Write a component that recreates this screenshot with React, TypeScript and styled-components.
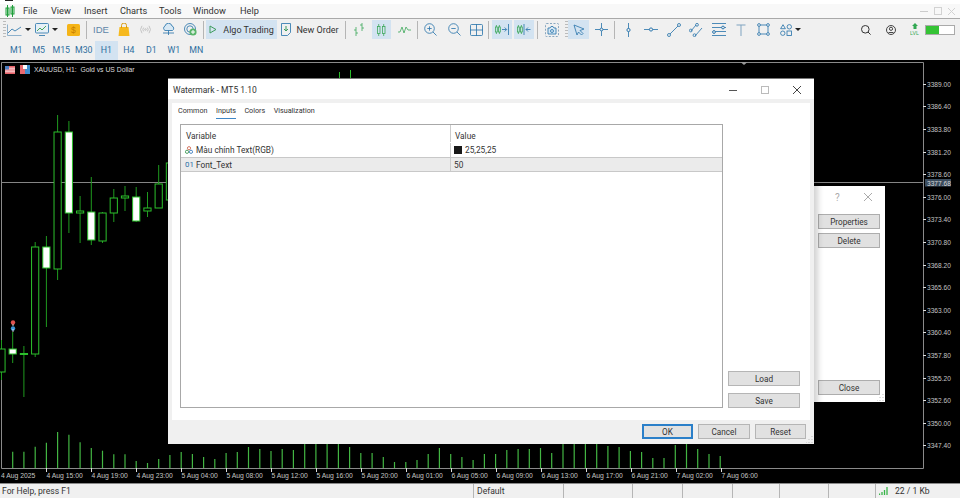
import React from "react";
import styled, { createGlobalStyle } from "styled-components";

const Global = createGlobalStyle`
  html, body { margin: 0; padding: 0; background: #f0f0f0; }
  body { width: 960px; height: 498px; overflow: hidden; font-family: Roboto, "Liberation Sans", sans-serif; font-size: 8.5px; color: #333; }
  * { box-sizing: border-box; }
`;

const Page = styled.div`width: 960px; height: 498px; display: flex; flex-direction: column;`;
const TopStrip = styled.div`height: 4px; background: #fff; flex: none; padding-left: 5px;`;
const TopMark = styled.div`width: 8px; height: 1px; background: #222;`;
const MenuBar = styled.div`height: 15px; flex: none; background: #f8f8f8; border-bottom: 1px solid #a9a9a9; display: flex; align-items: center; position: relative;`;
const MenuLogo = styled.div`width: 23px; padding-left: 5px; display: flex; align-items: center;`;
const MenuItem = styled.span<{ $w: number }>`width: ${p => p.$w}px; font-size: 9.2px; color: #333; line-height: 14px;`;
const WinControls = styled.div`margin-left: auto; padding-right: 5px; width: 40px; display: flex; justify-content: space-between; align-items: center;`;

const ToolRow = styled.div`height: 21px; flex: none; background: #f0f0f0; display: flex; align-items: center;`;
const PeriodRow = styled.div`height: 20px; flex: none; background: #f0f0f0; display: flex; align-items: center; padding-left: 5px;`;
const Gripper = styled.div<{ $m?: number }>`width: 3px; height: 18px; flex: none; margin-left: ${p => p.$m ?? 3}px; background: repeating-linear-gradient(to bottom, #bbb 0 1px, transparent 1px 3px);`;
const Sep = styled.div<{ $m?: number }>`width: 1px; height: 18px; background: #b5b5b5; flex: none; margin-left: ${p => p.$m ?? 0}px;`;
const Tool = styled.div<{ $w: number; $on?: boolean; $m?: number; $gap?: number }>`
  width: ${p => p.$w}px; height: 19px; flex: none; margin-left: ${p => p.$m ?? 0}px;
  display: flex; align-items: center; justify-content: center; gap: ${p => p.$gap ?? 3}px;
  font-size: 9px; color: #333;
  background: ${p => (p.$on ? "#d3e3f1" : "transparent")};
`;
const IdeLabel = styled.span`font-size: 9.5px; color: #5e86a8; font-family: "Liberation Sans", sans-serif;`;
const Caret = styled.span`width: 0; height: 0; border-left: 3px solid transparent; border-right: 3px solid transparent; border-top: 3px solid #222;`;
const RightTools = styled.div`margin-left: auto; padding-right: 5px; display: flex; align-items: center;`;
const Progress = styled.div`width: 30px; height: 10px; border: 1px solid #aaa; background: #fff; display: flex;`;
const ProgressFill = styled.div`background: #35c335; height: 100%;`;
const Period = styled.div<{ $on?: boolean }>`
  width: 22.5px; height: 19px; display: flex; align-items: center; justify-content: center;
  font-size: 8.8px; color: #2f6f9f; background: ${p => (p.$on ? "#d3e3f1" : "transparent")};
`;

const Chart = styled.div`flex: 1; position: relative; background: #000; min-height: 0;`;
const ChartSvg = styled.svg`display: block;`;
const ChartTitle = styled.div`position: absolute; left: 5px; top: 5px; display: flex; align-items: center; gap: 4.5px; color: #ddd; font-size: 6.8px; line-height: 9px; font-family: "Liberation Sans", sans-serif; white-space: pre;`;

const BackWindow = styled.div`
  position: absolute; left: 640px; top: 126px; width: 245px; height: 216px; background: #fff;
  padding: 0 5px 7px 0; display: flex; flex-direction: column; align-items: flex-end;
`;
const BackTitle = styled.div`height: 22px; width: 62px; display: flex; align-items: center; justify-content: space-between; padding: 0 8px 0 17px; margin-bottom: 6px; color: #aaa; font-size: 10px;`;
const BackButton = styled.div<{ $mt?: number }>`
  width: 62px; height: 15px; flex: none; margin-bottom: 4px; background: #e1e1e1; border: 1px solid #adadad;
  display: flex; align-items: center; justify-content: center; font-size: 8.2px; color: #333;
  ${p => (p.$mt ? `margin-top: auto; margin-bottom: 0;` : "")}
`;

const Dialog = styled.div`
  position: absolute; left: 168px; top: 18px; width: 646px; height: 366px; background: #f0f0f0;
  border-top: 1px solid #777; display: flex; flex-direction: column;
  box-shadow: 4px 0 6px rgba(0,0,0,.18);
`;
const DialogTitle = styled.div`height: 20px; flex: none; background: #fff; display: flex; align-items: center; justify-content: space-between; padding: 1px 13px 0 5px; font-size: 8.5px; color: #333;`;
const WinBtns = styled.div`display: flex; align-items: center; gap: 24px;`;
const PageArea = styled.div`flex: 1; min-height: 0; margin: 4px 4px 0 4px; background: #fff; display: flex; flex-direction: column; padding: 0 0 0 8px;`;
const Tabs = styled.div`height: 19px; flex: none; display: flex; gap: 7.5px; margin-left: -2px; align-items: flex-start; padding-top: 2px;`;
const Tab = styled.div<{ $on?: boolean }>`height: 14px; line-height: 12px; font-size: 7.2px; color: #333; margin-right: 1px; ${p => (p.$on ? "border-bottom: 1px solid #3d86c6;" : "")}`;
const Content = styled.div`flex: 1; min-height: 0; display: flex; padding-bottom: 12px; padding-top: 2px;`;
const Table = styled.div`width: 543px; border: 1px solid #a8a8a8; background: #fff; display: flex; flex-direction: column;`;
const TRow = styled.div<{ $sel?: boolean; $h: number; $pt?: number }>`
  height: ${p => p.$h}px; display: grid; grid-template-columns: 270px 1fr; align-items: center; flex: none;
  font-size: 8.3px; color: #333; padding-top: ${p => p.$pt ?? 0}px;
  ${p => (p.$sel ? "background: #ebebeb; border-top: 1px solid #c8c8c8; border-bottom: 1px solid #c8c8c8;" : "")}
`;
const Cell = styled.div`display: flex; align-items: center; height: 100%; padding-left: 4px; gap: 3px; border-right: 1px solid #ccc;`;
const VCell = styled.div`display: flex; align-items: center; height: 100%; padding-left: 3px; gap: 3px;`;
const HeadCell = styled(Cell)`padding: 4px 0 0 5px;`;
const HeadVCell = styled(VCell)`padding: 4px 0 0 4px;`;
const Blue01 = styled.span`color: #2a6ea6; font-size: 7.8px; width: 8px;`;
const Swatch = styled.span`width: 8px; height: 8px; background: #191919; display: block;`;
const Side = styled.div`margin-left: 5px; width: 72px; display: flex; flex-direction: column; justify-content: flex-end; gap: 7px;`;
const Footer = styled.div`height: 24px; flex: none; display: flex; gap: 5px; justify-content: flex-end; padding: 4px 8px 0 0;`;
const Btn = styled.div<{ $primary?: boolean; $w?: number; $h?: number }>`
  width: ${p => (p.$w ? p.$w + "px" : "100%")}; height: ${p => p.$h ?? 15}px; flex: none;
  background: #e1e1e1; border: 1px solid ${p => (p.$primary ? "#2a7fc9" : "#b5b5b5")};
  ${p => (p.$primary ? "box-shadow: inset 0 0 0 1px #2a7fc9;" : "")}
  display: flex; align-items: center; justify-content: center; font-size: 8.2px; color: #333;
`;
const Grip = styled.svg`position: absolute; right: 1px; bottom: 1px;`;

const Status = styled.div`height: 15px; flex: none; background: #f0f0f0; border-top: 1px solid #8a8a8a; display: flex; font-size: 8.6px; color: #333; position: relative;`;
const SCell = styled.div<{ $w: number; $pl?: number }>`width: ${p => p.$w}px; flex: none; height: 100%; border-right: 1px solid #b5b5b5; padding-left: ${p => p.$pl ?? 3}px; display: flex; align-items: center; gap: 4px; white-space: nowrap;`;
const SEnd = styled.div`flex: 1; display: flex; align-items: center; gap: 6px; padding-left: 3px;`;

const S = { stroke: "#2f78ae", fill: "none", strokeWidth: 0.85 } as const;
const Ico = ({ w = 14, h = 14, children, ...r }: any) => (
  <svg width={w} height={h} viewBox={`0 0 ${w} ${h}`} {...r}>{children}</svg>
);

const AppLogo = () => (
  <Ico w={10} h={12}>
    <g stroke="#1f9e3a" fill="#dff3e2"><rect x="1" y="3" width="3" height="7" /><rect x="6" y="2" width="3" height="7" /><path d="M2.5 0v12M7.5 0v12" /></g>
  </Ico>
);
const LineIco = () => (
  <Ico w={15} h={12}><path d="M.5 .5v11h14" stroke="#8fb1cc" fill="none" /><path d="M1 9l4-4 3 2 6-4" {...S} /></Ico>
);
const MonitorIco = () => (
  <Ico w={14} h={13}><rect x=".5" y=".5" width="13" height="9.5" rx="1" {...S} fill="#e6f0f7" /><path d="M2 8l3-3 2 2 4-4" stroke="#4aa65a" fill="none" /><path d="M4 12.5h6" {...S} /></Ico>
);
const GoldIco = () => (
  <Ico w={13} h={12}><rect width="13" height="12" rx="1.5" fill="#f5b417" /><text x="4" y="9" fontSize="8.5" fill="#c77e00" fontFamily="Liberation Sans">$</text></Ico>
);
const BagIco = () => (
  <Ico w={12} h={13}><path d="M1.5 4h9l1 9H.5z" fill="#f6b91e" /><path d="M3.5 5V2.5a2.5 2.5 0 0 1 5 0V5" stroke="#d99a10" fill="none" /></Ico>
);
const RadioIco = () => (
  <Ico w={13} h={9}><g stroke="#c4c4c4" fill="none"><path d="M3 .8a6 6 0 0 0 0 7.4M10 .8a6 6 0 0 1 0 7.4M4.6 2.6a3 3 0 0 0 0 3.8M8.4 2.6a3 3 0 0 1 0 3.8" /><circle cx="6.5" cy="4.5" r=".8" /></g></Ico>
);
const CloudIco = () => (
  <Ico w={13} h={13}><path d="M3 7.5a2.5 2.5 0 0 1 0-4.5 3.6 3.6 0 0 1 7 0 2.5 2.5 0 0 1 .5 4.5z" {...S} fill="#d7e8f4" /><path d="M1 10h11M6.5 7.5V12" {...S} /></Ico>
);
const TargetIco = () => (
  <Ico w={13} h={13}><g {...S}><circle cx="6" cy="6" r="5.5" /><circle cx="6" cy="6" r="3.2" /></g><circle cx="9" cy="9" r="3.6" fill="#5ab56a" /><path d="M9 7v4M7 9h4" stroke="#fff" /></Ico>
);
const PlayIco = () => (
  <Ico w={8} h={9}><path d="M1 1l6 3.5L1 8z" stroke="#3c9b5c" fill="none" /></Ico>
);
const OrderIco = () => (
  <Ico w={10} h={13}><path d="M.5.5h9v9l-3 3h-6z" {...S} /><path d="M5 3v5M3 6l2 2 2-2" stroke="#3c9b5c" fill="none" /></Ico>
);
const G = "#3da85a";
const GS = { stroke: G, fill: "none", strokeWidth: 0.8 } as const;
const BarsIco = () => (
  <Ico w={13} h={13}><path d="M3 4v9M1 7h2M3 10h2M9 0v8M7 2h2M9 5h2" {...GS} /></Ico>
);
const CandlesIco = () => (
  <Ico w={9} h={12}><g {...GS}><rect x=".5" y="2.5" width="2.5" height="7" /><rect x="5.5" y="2.5" width="2.5" height="7" /><path d="M1.7 0v2.5M1.7 9.5V12M6.7 0v2.5M6.7 9.5V12" /></g></Ico>
);
const WaveIco = () => (
  <Ico w={13} h={9}><path d="M0 7h2l2-5 2 6 2-6 2 3h3" {...GS} /></Ico>
);
const ZoomIco = ({ plus }: { plus?: boolean }) => (
  <Ico w={13} h={13}><g {...S}><circle cx="5.5" cy="5.5" r="4.8" /><path d="M9 9l3.5 3.5M3.3 5.5h4.4" />{plus && <path d="M5.5 3.3v4.4" />}</g></Ico>
);
const GridIco = () => (
  <Ico w={13} h={12}><rect x=".5" y=".5" width="12" height="11" rx="1" {...S} /><path d="M6.5 0v12M0 6h13" {...S} /></Ico>
);
const ShiftIco = ({ flip }: { flip?: boolean }) => (
  <Ico w={14} h={11}>
    {flip ? (
      <g fill="none"><g {...GS}><rect x=".5" y="3" width="1.8" height="5" /><rect x="3.5" y="3" width="1.8" height="5" /><path d="M1.4 1v2M1.4 8v2M4.4 1v2M4.4 8v2" /></g><path d="M7 0v11" {...S} /><path d="M13.5 5.5H9M11 3.5l-2 2 2 2" {...S} /></g>
    ) : (
      <g fill="none"><g {...GS}><rect x=".5" y="3" width="1.8" height="5" /><rect x="3.5" y="3" width="1.8" height="5" /><path d="M1.4 1v2M1.4 8v2M4.4 1v2M4.4 8v2" /></g><path d="M13.5 0v11" {...S} /><path d="M7 5.5h4.5M9.7 3.5l2 2-2 2" {...S} /></g>
    )}
  </Ico>
);
const CameraIco = () => (
  <Ico w={14} h={14}><rect x=".5" y=".5" width="13" height="13" rx="1" fill="none" stroke="#6f94b2" strokeWidth=".8" strokeDasharray="2 1.5" /><path d="M3 5h2l1-1.5h2L9 5h2v6H3z" {...S} fill="#d7e8f4" /><circle cx="7" cy="8" r="1.5" {...S} /></Ico>
);
const CursorIco = () => (
  <Ico w={12} h={12}><path d="M1 1l10 4-4 1.5 3 3-1.5 1.5-3-3L4 11z" {...S} /></Ico>
);
const CrossIco = () => (
  <Ico w={13} h={13}><path d="M6.5 0v13M0 6.5h13" {...S} /><circle cx="6.5" cy="6.5" r="1.4" fill="#f0f0f0" stroke="#2f78ae" /></Ico>
);
const VLineIco = () => (
  <Ico w={5} h={14}><path d="M2.5 0v14" {...S} /><circle cx="2.5" cy="7" r="1.6" fill="#f0f0f0" stroke="#2f78ae" /></Ico>
);
const HLineIco = () => (
  <Ico w={14} h={5}><path d="M0 2.5h14" {...S} /><circle cx="7" cy="2.5" r="1.6" fill="#f0f0f0" stroke="#2f78ae" /></Ico>
);
const TrendIco = () => (
  <Ico w={14} h={14}><path d="M3 11L11 3" {...S} /><circle cx="2" cy="12" r="1.5" {...S} /><circle cx="12" cy="2" r="1.5" {...S} /></Ico>
);
const ChannelIco = () => (
  <Ico w={14} h={14}><path d="M2 8l5-6M6 13l7-8" {...S} /><circle cx="8" cy="1.8" r="1.4" {...S} /><circle cx="1.8" cy="7.5" r="1.4" {...S} /><circle cx="5.5" cy="12.2" r="1.4" {...S} /></Ico>
);
const FiboIco = () => (
  <Ico w={14} h={13}><path d="M0 .5h14M0 4.5h14M0 12.5h14M3 8.5h11" {...S} /><circle cx="11" cy="4.5" r="1.4" fill="#f0f0f0" stroke="#2f78ae" /><circle cx="2" cy="9" r="1.4" fill="#f0f0f0" stroke="#2f78ae" /></Ico>
);
const TextToolIco = () => (
  <Ico w={10} h={12}><path d="M.5 1h9M5 1v11" stroke="#7ea3c0" fill="none" /></Ico>
);
const RectIco = () => (
  <Ico w={13} h={13}><rect x="2" y="2" width="9" height="9" {...S} /><g {...S} fill="#f0f0f0"><circle cx="2" cy="2" r="1.4" /><circle cx="11" cy="2" r="1.4" /><circle cx="2" cy="11" r="1.4" /><circle cx="11" cy="11" r="1.4" /></g></Ico>
);
const ShapesIco = () => (
  <Ico w={12} h={12}><path d="M3 .7l2.4 4H.6z" {...S} /><circle cx="9.3" cy="2.8" r="2.2" {...S} /><circle cx="2.8" cy="9.2" r="2.2" {...S} /><rect x="7" y="7" width="4.5" height="4.5" {...S} /></Ico>
);
const SearchIco = () => (
  <Ico w={10} h={10}><circle cx="4.3" cy="4.3" r="3.8" fill="none" stroke="#333" /><path d="M7 7l2.6 2.6" stroke="#333" /></Ico>
);
const UserIco = () => (
  <Ico w={10} h={10}><circle cx="5" cy="5" r="4.5" fill="none" stroke="#444" /><circle cx="5" cy="3.8" r="1.6" fill="none" stroke="#444" /><path d="M2.5 7.5h5" stroke="#444" /></Ico>
);
const LvlIco = () => (
  <Ico w={10} h={13}><path d="M5 0l3 3H6.5v3h-3V3H2z" fill="#32a852" /><text x="0" y="12" fontSize="5.2" fill="#32a852" fontFamily="Liberation Sans">LVL</text></Ico>
);
const MinIco = ({ c = "#555" }: { c?: string }) => <Ico w={8} h={8}><path d="M0 4.5h8" stroke={c} /></Ico>;
const MaxIco = ({ c = "#bbb" }: { c?: string }) => <Ico w={8} h={8}><rect x=".5" y=".5" width="7" height="7" fill="none" stroke={c} /></Ico>;
const CloseIco = ({ c = "#444", s = 8 }: { c?: string; s?: number }) => (
  <Ico w={s} h={s}><path d={`M0 0L${s} ${s}M${s} 0L0 ${s}`} stroke={c} /></Ico>
);
const FlagIco = () => (
  <Ico w={10} h={8}><rect width="10" height="8" fill="#e8636a" /><path d="M0 2.2h10M0 4h10M0 5.8h10" stroke="#fff" strokeWidth=".8" /><rect width="4" height="3.5" fill="#4d7fc0" /></Ico>
);
const SaveIco = () => (
  <Ico w={10} h={9}><rect width="10" height="9" fill="#fff" /><rect width="5" height="9" fill="#e86a70" /><rect x="5" width="5" height="9" fill="#3f8fd0" /><rect x="3" y="0" width="4" height="4" fill="#fff" /></Ico>
);
const ParamIco = () => (
  <Ico w={8} h={8}><circle cx="4" cy="2.2" r="1.6" fill="none" stroke="#d06a55" strokeWidth=".9" /><circle cx="2" cy="5.8" r="1.6" fill="none" stroke="#3e9a55" strokeWidth=".9" /><circle cx="6" cy="5.8" r="1.6" fill="none" stroke="#3f7fc0" strokeWidth=".9" /></Ico>
);
const SignalIco = () => (
  <Ico w={10} h={8}><path d="M.5 8V6.5M3 8V5M5.5 8V3M8 8V0" stroke="#39b54a" strokeWidth="1.3" /></Ico>
);

/* chart data */
const X0 = 12.7, STEP = 11.23;
const cx = (i: number) => X0 + STEP * i;
const candles: [number, number, number, number, number, boolean][] = [
  [-1, 340, 380, 349, 372, false],
  [0, 332, 363, 349, 354, true],
  [1, 346, 397, 353.5, 354.5, false],
  [2, 242, 357, 247, 354, false],
  [3, 236, 327, 247, 268, true],
  [4, 115, 280, 132, 269, false],
  [5, 121, 233, 132, 213, true],
  [6, 196, 243, 211, 213, false],
  [7, 177, 245, 212, 240, true],
  [8, 212, 243, 213, 241, false],
  [9, 189, 222, 198, 213, false],
  [10, 186, 211, 196, 198, false],
  [11, 187, 222, 197, 221, true],
  [12, 192, 217, 208, 211, false],
  [13, 165, 208, 184, 208, false],
  [14, 150, 215, 163, 200, false],
];
const volTops = [
  451.7, 451.7, 446.7, 442.7, 432, 434.7, 442.3, 448, 450.7, 454.3, 454.3, 461, 463, 459, 455,
  452, 454, 457, 459, 453, 452, 447, 449, 451, 449, 450, 444, 444, 444, 444, 447, 453, 453, 457,
  462, 462, 460, 454, 448, 454, 457, 460, 454, 454, 450, 449, 449, 448, 453, 444, 444, 444, 444,
  446, 447, 451, 452, 458, 458, 445, 444, 449, 454, 456,
];
const tickLabels = [
  "4 Aug 15:00", "4 Aug 19:00", "4 Aug 23:00", "5 Aug 04:00", "5 Aug 08:00", "5 Aug 12:00", "5 Aug 16:00", "5 Aug 20:00",
  "6 Aug 01:00", "6 Aug 05:00", "6 Aug 09:00", "6 Aug 13:00", "6 Aug 17:00", "6 Aug 21:00", "7 Aug 02:00", "7 Aug 06:00",
];
const prices = ["3389.00","3386.40","3383.80","3381.20","3378.60","3376.00","3373.40","3370.80","3368.20","3365.60","3363.00","3360.40","3357.80","3355.20","3352.60","3350.00","3347.40"];
const GREEN = "#2cc02c";
const AXIS = "#8a8a8a";
const LABEL = "#c4c4c4";

const ChartDrawing = () => (
  <ChartSvg width={960} height={423} viewBox="0 60 960 423">
    <path d="M1.5 62.5H923.5V468.5H1.5z" fill="none" stroke={AXIS} />
    <path d="M2 182.5H923" stroke="#858585" />
    <path d="M740.5 62h7l-3.5 3z" fill="#999" />
    {volTops.map((t, i) => (
      <path key={i} d={`M${cx(i).toFixed(1)} 468V${t}`} stroke="#43b643" strokeWidth={1.2} />
    ))}
    {candles.map(([i, wt, wb, bt, bb, filled]) => (
      <g key={i}>
        <path d={`M${cx(i).toFixed(1)} ${wt}V${wb}`} stroke="#1f9a1f" />
        <rect x={cx(i) - 3.6} y={bt} width={7.2} height={bb - bt} fill={filled ? "#fff" : "#000"} stroke={GREEN} />
      </g>
    ))}
    <path d="M339.5 72v6M350.5 70v8" stroke={GREEN} />
    <circle cx="13" cy="322.5" r="2.2" fill="#e0524f" />
    <circle cx="13" cy="328.5" r="2.2" fill="#3a94d6" />
    <path d="M13 326v-2M13 329v3" stroke="#fff" strokeWidth=".8" />
    <text x="1" y="477.5" fontFamily="Liberation Sans" fontSize="6.8" fill={LABEL}>4 Aug 2025</text>
    {tickLabels.map((t, i) => {
      const x = 46 + 45 * i;
      return (
        <g key={t}>
          <path d={`M${x + 0.5} 468v4`} stroke="#ddd" />
          <text x={x + 0.5} y="477.5" fontFamily="Liberation Sans" fontSize="6.8" fill={LABEL}>{t}</text>
        </g>
      );
    })}
    {prices.map((p, i) => {
      const y = Math.round(83.7 + 22.6 * i);
      return (
        <g key={p}>
          <path d={`M923 ${y + 0.5}h3`} stroke="#ddd" />
          <text x="927" y={y + 3} fontFamily="Liberation Sans" fontSize="6.6" fill={LABEL}>{p}</text>
        </g>
      );
    })}
    <rect x="925" y="179" width="26" height="7.5" fill="#3c4d5e" />
    <text x="927" y="185.5" fontFamily="Liberation Sans" fontSize="6.6" fill="#d8d8d8">3377.68</text>
  </ChartSvg>
);

export default function App() {
  return (
    <>
      <Global />
      <Page>
        <TopStrip><TopMark /></TopStrip>
        <MenuBar>
          <MenuLogo><AppLogo /></MenuLogo>
          <MenuItem $w={28}>File</MenuItem>
          <MenuItem $w={33}>View</MenuItem>
          <MenuItem $w={36}>Insert</MenuItem>
          <MenuItem $w={39}>Charts</MenuItem>
          <MenuItem $w={34}>Tools</MenuItem>
          <MenuItem $w={47}>Window</MenuItem>
          <MenuItem $w={30}>Help</MenuItem>
          <WinControls>
            <MinIco c="#ccc" /><MaxIco c="#d2d2d2" /><CloseIco c="#d2d2d2" s={7} />
          </WinControls>
        </MenuBar>
        <ToolRow>
          <Gripper />
          <Tool $w={26}><LineIco /><Caret /></Tool>
          <Tool $w={29}><MonitorIco /><Caret /></Tool>
          <Tool $w={25}><GoldIco /></Tool>
          <Sep />
          <Tool $w={28}><IdeLabel>IDE</IdeLabel></Tool>
          <Tool $w={17}><BagIco /></Tool>
          <Tool $w={27}><RadioIco /></Tool>
          <Tool $w={18}><CloudIco /></Tool>
          <Tool $w={26}><TargetIco /></Tool>
          <Sep />
          <Tool $w={71} $m={2} $on $gap={6}><PlayIco />Algo Trading</Tool>
          <Tool $w={66} $gap={5}><OrderIco />New Order</Tool>
          <Sep $m={2} />
          <Tool $w={26}><BarsIco /></Tool>
          <Tool $w={19} $on><CandlesIco /></Tool>
          <Tool $w={26}><WaveIco /></Tool>
          <Sep />
          <Tool $w={25}><ZoomIco plus /></Tool>
          <Tool $w={22}><ZoomIco /></Tool>
          <Tool $w={23}><GridIco /></Tool>
          <Sep />
          <Tool $w={20} $m={3} $on><ShiftIco /></Tool>
          <Tool $w={20} $m={2} $on><ShiftIco flip /></Tool>
          <Sep $m={3} />
          <Tool $w={27}><CameraIco /></Tool>
          <Gripper $m={0} />
          <Tool $w={21} $on><CursorIco /></Tool>
          <Tool $w={25}><CrossIco /></Tool>
          <Sep />
          <Tool $w={26}><VLineIco /></Tool>
          <Tool $w={19}><HLineIco /></Tool>
          <Tool $w={27}><TrendIco /></Tool>
          <Tool $w={17}><ChannelIco /></Tool>
          <Tool $w={30}><FiboIco /></Tool>
          <Tool $w={14}><TextToolIco /></Tool>
          <Tool $w={30}><RectIco /></Tool>
          <Tool $w={25}><ShapesIco /><Caret /></Tool>
          <RightTools>
            <Tool $w={24}><SearchIco /></Tool>
            <Tool $w={26}><UserIco /></Tool>
            <Tool $w={21}><LvlIco /></Tool>
            <Progress><ProgressFill style={{ width: "48%" }} /></Progress>
          </RightTools>
        </ToolRow>
        <PeriodRow>
          {["M1", "M5", "M15", "M30", "H1", "H4", "D1", "W1", "MN"].map(p => (
            <Period key={p} $on={p === "H1"}>{p}</Period>
          ))}
        </PeriodRow>
        <Chart>
          <ChartDrawing />
          <ChartTitle><FlagIco /><SaveIco />XAUUSD, H1:  Gold vs US Dollar</ChartTitle>
          <BackWindow>
            <BackTitle><span>?</span><CloseIco c="#aaa" s={8} /></BackTitle>
            <BackButton>Properties</BackButton>
            <BackButton>Delete</BackButton>
            <BackButton $mt={1}>Close</BackButton>
            <Grip width="7" height="7" viewBox="0 0 7 7"><path d="M6 0v1M3 3v1M6 3v1M0 6v1M3 6v1M6 6v1" stroke="#bbb" /></Grip>
          </BackWindow>
          <Dialog>
            <DialogTitle>
              Watermark - MT5 1.10
              <WinBtns><MinIco /><MaxIco /><CloseIco /></WinBtns>
            </DialogTitle>
            <PageArea>
              <Tabs>
                <Tab>Common</Tab>
                <Tab $on>Inputs</Tab>
                <Tab>Colors</Tab>
                <Tab>Visualization</Tab>
              </Tabs>
              <Content>
                <Table>
                  <TRow $h={17}><HeadCell>Variable</HeadCell><HeadVCell>Value</HeadVCell></TRow>
                  <TRow $h={15} $pt={1}><Cell><ParamIco />Màu chính Text(RGB)</Cell><VCell><Swatch />25,25,25</VCell></TRow>
                  <TRow $h={15} $sel><Cell><Blue01>01</Blue01>Font_Text</Cell><VCell>50</VCell></TRow>
                </Table>
                <Side>
                  <Btn>Load</Btn>
                  <Btn>Save</Btn>
                </Side>
              </Content>
            </PageArea>
            <Footer>
              <Btn $primary $w={51} $h={15}>OK</Btn>
              <Btn $w={52} $h={15}>Cancel</Btn>
              <Btn $w={51} $h={15}>Reset</Btn>
            </Footer>
            <Grip width="7" height="7" viewBox="0 0 7 7"><path d="M6 0v1M3 3v1M6 3v1M0 6v1M3 6v1M6 6v1" stroke="#bbb" /></Grip>
          </Dialog>
        </Chart>
        <Status>
          <SCell $w={474} $pl={2}>For Help, press F1</SCell>
          <SCell $w={90}>Default</SCell>
          <SCell $w={69} />
          <SCell $w={50} />
          <SCell $w={50} />
          <SCell $w={47} />
          <SCell $w={49} />
          <SCell $w={47} />
          <SEnd><SignalIco />22 / 1 Kb</SEnd>
        </Status>
      </Page>
    </>
  );
}
